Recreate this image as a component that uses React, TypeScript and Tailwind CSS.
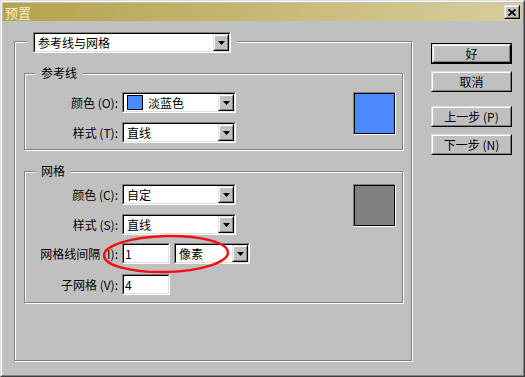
const FONT = { fontFamily: '"Noto Sans CJK SC", "Liberation Sans", sans-serif' };

// 98식 입체 테두리 조각들
const SUNKEN_OUT = 'border border-t-[#808080] border-l-[#808080] border-r-white border-b-white';
const SUNKEN_IN = 'border border-t-black border-l-black border-r-[#dfdfdf] border-b-[#dfdfdf]';
const RAISED_OUT = 'border border-t-[#dfdfdf] border-l-[#dfdfdf] border-r-black border-b-black';
const RAISED_IN = 'border border-t-white border-l-white border-r-[#808080] border-b-[#808080]';
const ETCHED = 'border border-[#808080] shadow-[inset_1px_1px_0_#fff,1px_1px_0_#fff]';

function Arrow() {
  return (
    <svg width="7" height="4" viewBox="0 0 7 4">
      <polygon points="0,0 7,0 3.5,4" fill="#000" />
    </svg>
  );
}

function DropButton() {
  return (
    <div className={`h-full w-[16px] bg-[#c0c0c0] ${RAISED_OUT}`}>
      <div className={`flex h-full items-center justify-center ${RAISED_IN}`}>
        <Arrow />
      </div>
    </div>
  );
}

function Combo({ width, children }: { width: string; children: React.ReactNode }) {
  return (
    <div className={`h-[21px] shrink-0 ${width} ${SUNKEN_OUT}`}>
      <div className={`flex h-full bg-white ${SUNKEN_IN}`}>
        <div className="flex flex-1 items-center gap-[5px] pl-[3px] leading-none">{children}</div>
        <DropButton />
      </div>
    </div>
  );
}

function Field({ value }: { value: string }) {
  return (
    <div className={`h-[21px] w-[48px] shrink-0 ${SUNKEN_OUT}`}>
      <div className={`flex h-full items-center bg-white pl-[1px] leading-none ${SUNKEN_IN}`}>{value}</div>
    </div>
  );
}

function Row({ label, className = '', children }: { label: string; className?: string; children: React.ReactNode }) {
  return (
    <div className={`flex items-center ${className}`}>
      <span className="mr-[4px] w-[93px] whitespace-pre text-right leading-none">{label}</span>
      {children}
    </div>
  );
}

function Swatch({ color }: { color: string }) {
  return (
    <div className={`ml-auto mr-[6px] h-[43px] w-[43px] shrink-0 ${SUNKEN_OUT}`}>
      <div className="h-full border border-black" style={{ backgroundColor: color }} />
    </div>
  );
}

function Group({ title, height, className = '', children }: { title: string; height: string; className?: string; children: React.ReactNode }) {
  return (
    <div className={`ml-[9px] w-[379px] ${className}`}>
      <div className="relative ml-[11px] h-[16px] w-fit bg-[#c0c0c0] px-[6px] leading-[16px]">{title}</div>
      <div className={`-mt-[8px] ${height} ${ETCHED}`}>{children}</div>
    </div>
  );
}

function Button({ label, primary = false, className = '' }: { label: string; primary?: boolean; className?: string }) {
  const face = (
    <div className={`h-full ${RAISED_OUT}`}>
      <div className={`flex h-full items-center justify-center whitespace-pre leading-none ${RAISED_IN}`}>{label}</div>
    </div>
  );
  return (
    <div className={`h-[21px] w-[81px] bg-[#c0c0c0] ${className}`}>
      {primary ? <div className="h-full border border-black">{face}</div> : face}
    </div>
  );
}

export default function App() {
  return (
    <div
      className="relative h-[377px] w-[525px] border border-t-[#dfdfdf] border-l-[#dfdfdf] border-r-[#404040] border-b-[#404040] bg-[#c0c0c0] text-[12px] text-black"
      style={FONT}
    >
      <div className="h-full border border-t-white border-l-white border-r-[#808080] border-b-[#808080] p-[1px]">
        {/* 제목 표시줄 */}
        <div className="flex h-[18px] items-center bg-gradient-to-r from-[#b4a34b] to-[#d8ce9c] pl-[2px] pr-[2px]">
          <span className="text-[13px] leading-none text-[#f2ecd2]">预置</span>
          <div className={`ml-auto h-[14px] w-[16px] bg-[#c0c0c0] ${RAISED_OUT}`}>
            <div className={`flex h-full items-center justify-center ${RAISED_IN}`}>
              <svg width="8" height="7" viewBox="0 0 8 7">
                <path d="M0.5 0.5 L7.5 6.5 M7.5 0.5 L0.5 6.5" stroke="#000" strokeWidth="1.8" />
              </svg>
            </div>
          </div>
        </div>

        <div className="flex items-start">
          {/* 왼쪽 설정 패널 */}
          <div className="ml-[11px] mt-[11px] w-[398px]">
            <div className="relative ml-[13px] w-fit bg-[#c0c0c0] px-[6px]">
              <Combo width="w-[198px]">参考线与网格</Combo>
            </div>
            <div className={`-mt-[12px] h-[320px] ${ETCHED}`}>
              <Group title="参考线" height="h-[77px]" className="mt-[23px]">
                <div className="flex items-start pt-[18px]">
                  <div>
                    <Row label="颜色 (O):">
                      <Combo width="w-[114px]">
                        <span className="h-[15px] w-[16px] border border-black bg-[#4d88ff]" />
                        <span>淡蓝色</span>
                      </Combo>
                    </Row>
                    <Row label="样式 (T):" className="mt-[9px]">
                      <Combo width="w-[114px]">直线</Combo>
                    </Row>
                  </div>
                  <Swatch color="#4d88ff" />
                </div>
              </Group>

              <Group title="网格" height="h-[132px]" className="mt-[13px]">
                <div className="flex items-start pt-[12px]">
                  <div>
                    <Row label="颜色 (C):">
                      <Combo width="w-[114px]">自定</Combo>
                    </Row>
                    <Row label="样式 (S):" className="mt-[9px]">
                      <Combo width="w-[114px]">直线</Combo>
                    </Row>
                    <Row label="网格线间隔 (I):" className="mt-[8px]">
                      <Field value="1" />
                      <div className="ml-[4px]">
                        <Combo width="w-[76px]">像素</Combo>
                      </div>
                    </Row>
                    <Row label="子网格 (V):" className="mt-[10px]">
                      <Field value="4" />
                    </Row>
                  </div>
                  <Swatch color="#808080" />
                </div>
              </Group>
            </div>
          </div>

          {/* 오른쪽 버튼 열 */}
          <div className="ml-[19px] mt-[22px] flex flex-col">
            <Button label="好" primary />
            <Button label="取消" className="mt-[7px]" />
            <Button label="上一步 (P)" className="mt-[14px]" />
            <Button label="下一步 (N)" className="mt-[7px]" />
          </div>
        </div>
      </div>

      {/* 빨간 강조 타원 */}
      <svg className="pointer-events-none absolute left-[-1px] top-[-1px]" width="525" height="377" viewBox="0 0 525 377">
        <ellipse cx="166" cy="254" rx="62" ry="18" fill="none" stroke="#f01010" strokeWidth="2.5" transform="rotate(-1.5 166 254)" />
      </svg>
    </div>
  );
}
